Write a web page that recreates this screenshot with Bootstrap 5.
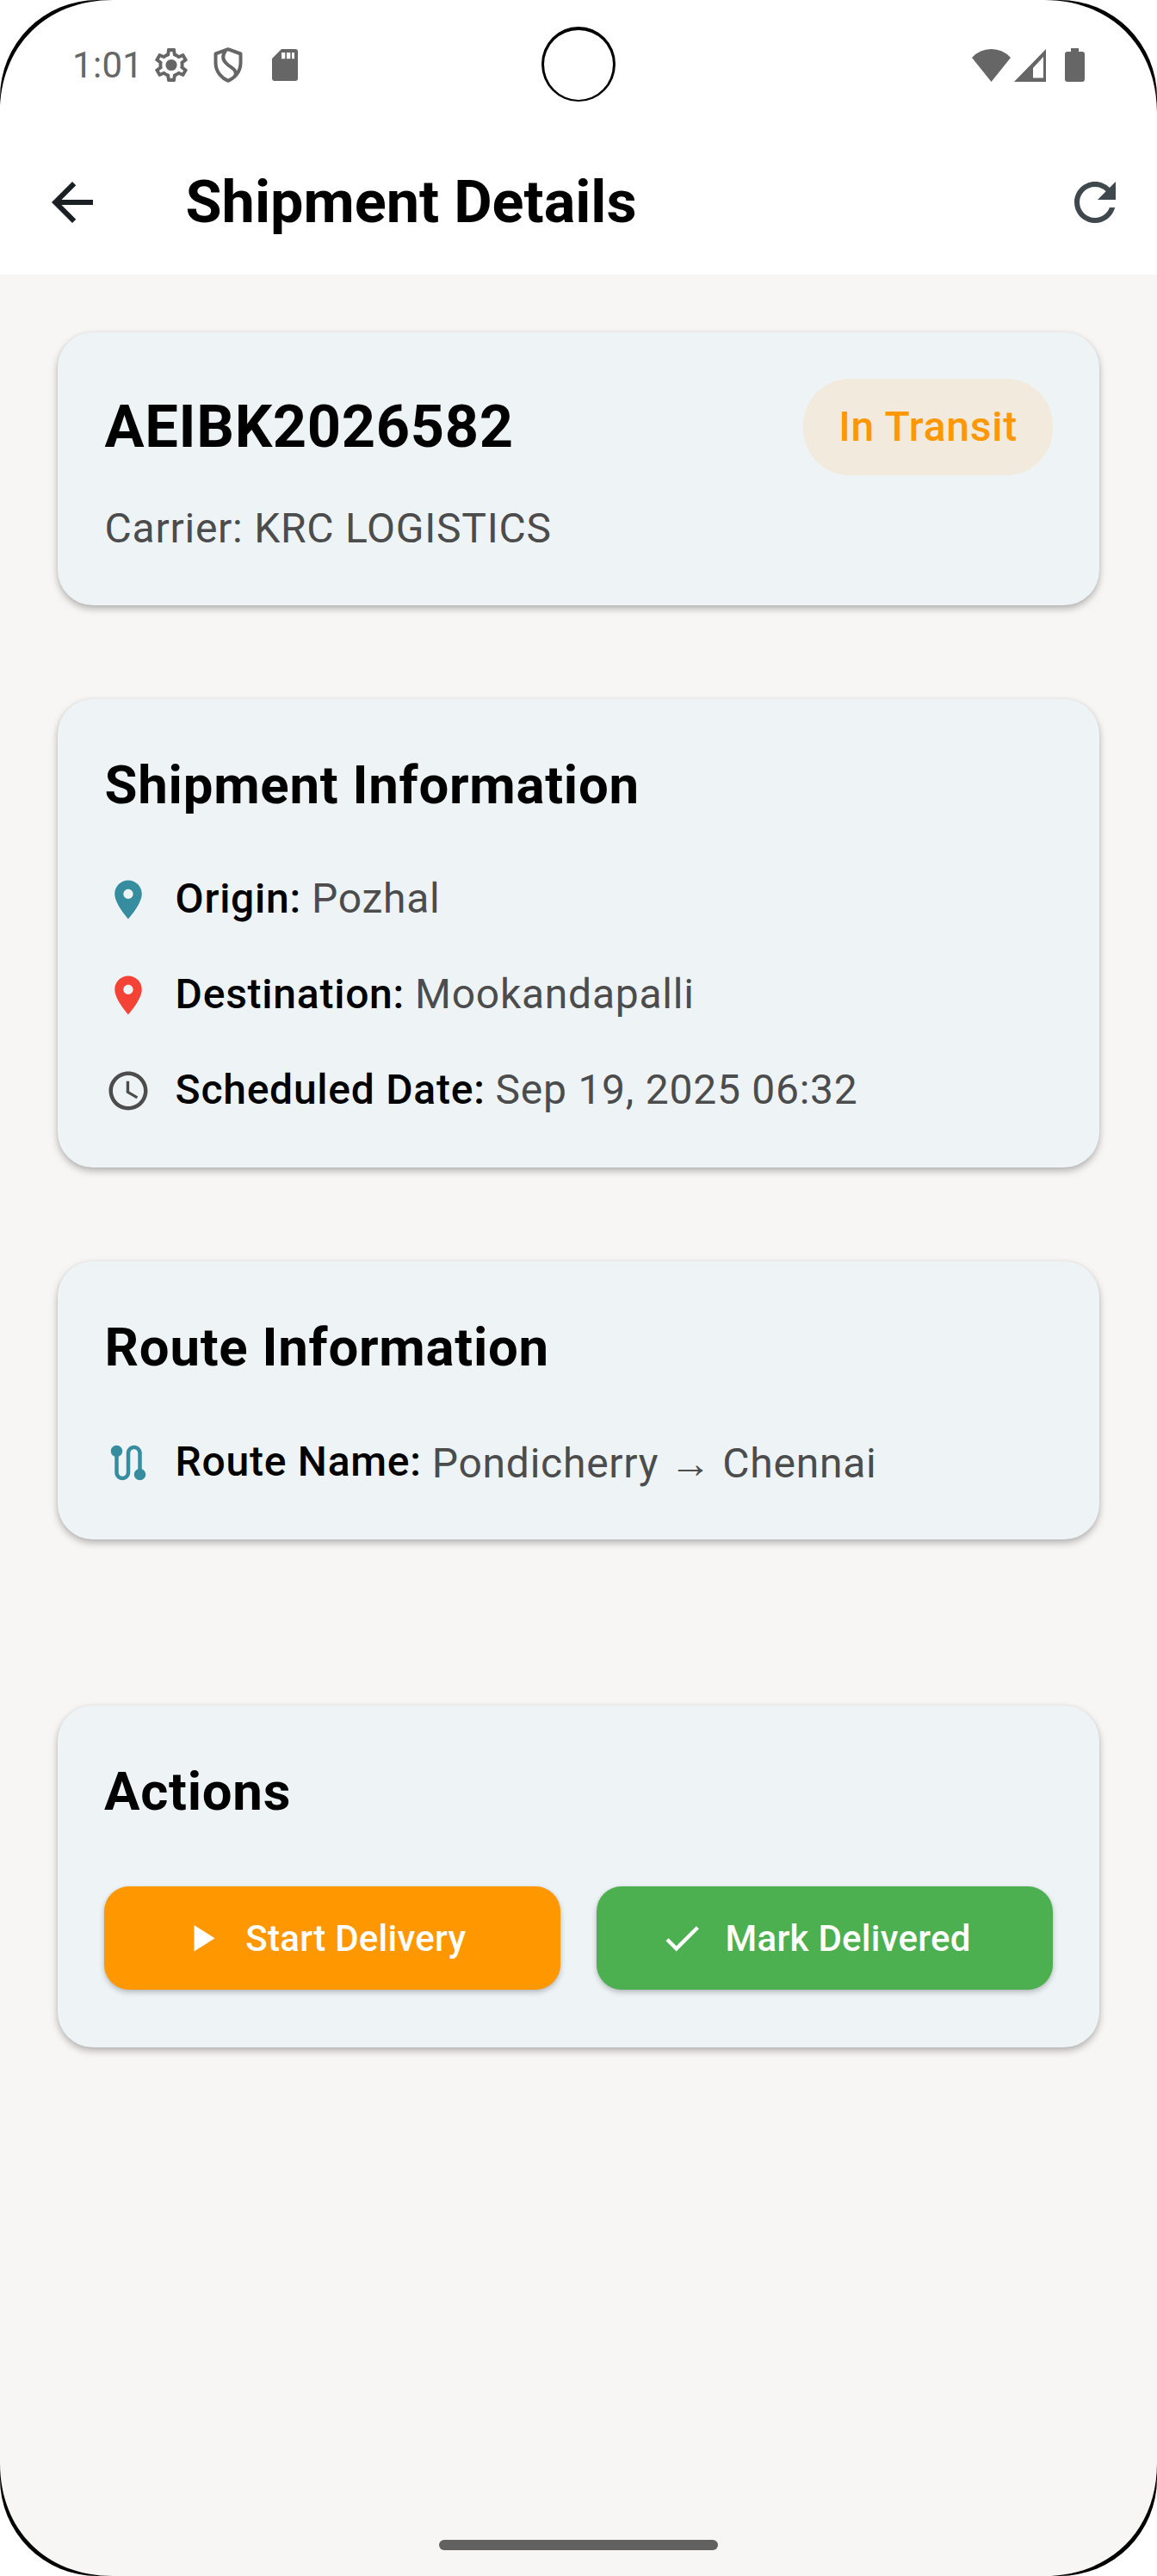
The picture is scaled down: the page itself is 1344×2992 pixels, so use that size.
<!DOCTYPE html>
<html lang="en">
<head>
<meta charset="utf-8">
<meta name="viewport" content="width=device-width, initial-scale=1">
<title>Shipment Details</title>
<link href="https://cdn.jsdelivr.net/npm/bootstrap@5.3.0/dist/css/bootstrap.min.css" rel="stylesheet">
<style>
  body { font-family: Roboto, "Liberation Sans", sans-serif; background: #f7f6f4; color: #000; }
  svg { display: block; flex: none; }
  .screen { min-height: 2992px; overflow: hidden; }
  .statusbar { height: 151px; padding: 0 84px; color: #666; font-size: 42px; letter-spacing: .3px; line-height: 1; }
  .camera-hole { top: 31px; left: 629px; width: 86px; height: 87px; border: 3px solid #000; border-top-width: 4px; border-bottom-width: 2px; }
  .appbar { height: 168px; padding: 0 36px 0 48px; }
  .appbar h1 { font-size: 68.4px; font-weight: 700; line-height: 1.2; margin: 0 0 0 95.5px; }
  .page-main { padding: 67px 67px 0; }
  .panel { background: #eef4f6; border: 0; border-radius: 41px; padding: 54px 54px 54.4px 54.6px; letter-spacing: .75px; font-size: 48px; line-height: 68.6px;
    box-shadow: 0 4px 9px rgba(0,0,0,.28), 0 0 4px rgba(0,0,0,.04); }
  .panel + .panel { margin-top: 109px; }
  .panel + .panel.info-panel { padding-bottom: 55px; }
  .panel + .panel.actions-panel { margin-top: 193px; padding: 54px 54.500px 67px 54px; }
  .panel h2 { font-size: 61.7px; font-weight: 700; line-height: 92px; margin: 0 0 52.5px; }
  .ship-id { font-size: 68.57px; font-weight: 700; letter-spacing: .65px; }
  .status-pill { background: #f1eadd; color: #ff9800; font-weight: 500; padding: 21.7px 41px; border-radius: 54px; }
  .soft { color: #4c4c4c; }
  .carrier-line { margin-top: 28px; }
  .info-rows { gap: 42.4px; }
  .info-rows .field { gap: 12px; }
  .field svg { margin-right: 16px; }
  .field .fw-medium { font-weight: 500; }
  .route-row { height: 70.5px; }
  .route-row .soft { padding-top: 4px; }
  .action-row { gap: 42px; margin-top: 64px; }
  .action-btn { flex: 1 1 0; height: 120px; border: 0; border-radius: 29px; font-size: 42px; font-weight: 500; letter-spacing: .25px; gap: 24.5px; padding: 0 22px 0 0;
    box-shadow: 0 3px 6px rgba(0,0,0,.24), 0 0 3px rgba(0,0,0,.05); }
  .action-btn, .action-btn:hover { color: #fff; }
  .btn-start, .btn-start:hover { background: #ff9800; }
  .btn-done, .btn-done:hover { background: #4caf50; }
  .home-pill { left: 510px; top: 2950px; width: 324px; height: 12px; border-radius: 6px; background: #616161; }
  .edge { width: 131px; height: 131px; }
  .edge-tr { transform: scaleX(-1); }
  .edge-bl { transform: scaleY(-1); }
  .edge-br { transform: scale(-1); }
</style>
</head>
<body>
<svg width="0" height="0" class="position-absolute">
  <defs>
    <g id="edge"><path fill="#fff" d="M0 0H131L113 0A113 113 0 0 0 0 113z"/><path d="M0 131V113A113 113 0 0 1 113 0H131C53.700 0 0 53.700 0 131z"/></g>
    <path id="pin" d="M12 2C8.130 2 5 5.130 5 9c0 5.250 7 13 7 13s7-7.750 7-13c0-3.870-3.130-7-7-7zm0 9.500c-1.380 0-2.500-1.120-2.500-2.500s1.120-2.500 2.500-2.500 2.500 1.120 2.500 2.500-1.120 2.500-2.500 2.500z"/>
  </defs>
</svg>

<div class="screen position-relative">
  <header class="bg-white">
    <div class="statusbar d-flex align-items-center">
      <span>1:01</span>
      <svg style="margin-left:13.500px" width="38" height="39" viewBox="2.200 2 19.600 20" fill="currentColor"><path d="M19.430 12.980c.04-.32.07-.64.07-.98 0-.34-.03-.66-.07-.98l2.110-1.650c.19-.15.24-.42.12-.64l-2-3.460c-.09-.16-.26-.25-.44-.25-.06 0-.12.01-.17.03l-2.490 1c-.52-.4-1.080-.73-1.690-.98l-.38-2.650C14.460 2.180 14.250 2 14 2h-4c-.25 0-.46.18-.49.42l-.38 2.650c-.61.25-1.170.59-1.690.98l-2.490-1c-.06-.02-.12-.03-.18-.03-.17 0-.34.09-.43.25l-2 3.460c-.13.22-.07.49.12.64l2.110 1.650c-.04.32-.07.65-.07.98 0 .33.03.66.07.98l-2.110 1.650c-.19.15-.24.42-.12.64l2 3.460c.09.16.26.25.44.25.06 0 .12-.01.17-.03l2.490-1c.52.4 1.080.73 1.690.98l.38 2.650c.03.24.24.42.49.42h4c.25 0 .46-.18.49-.42l.38-2.650c.61-.25 1.170-.59 1.690-.98l2.490 1c.06.02.12.03.18.03.17 0 .34-.09.43-.25l2-3.460c.12-.22.07-.49-.12-.64l-2.110-1.650zm-1.980-1.710c.04.31.05.52.05.73 0 .21-.02.43-.05.73l-.14 1.130.89.7 1.080.84-.7 1.210-1.270-.51-1.040-.42-.9.68c-.43.32-.84.56-1.250.73l-1.060.43-.16 1.130-.2 1.350h-1.400l-.19-1.350-.16-1.130-1.060-.43c-.43-.18-.83-.41-1.230-.71l-.91-.7-1.060.43-1.270.51-.7-1.210 1.080-.84.89-.7-.14-1.130c-.03-.31-.05-.54-.05-.74s.02-.43.05-.73l.14-1.130-.89-.7-1.080-.84.7-1.210 1.270.51 1.040.42.9-.68c.43-.32.84-.56 1.250-.73l1.060-.43.16-1.130.2-1.350h1.390l.19 1.350.16 1.130 1.060.43c.43.18.83.41 1.230.71l.91.7 1.060-.43 1.270-.51.7 1.210-1.070.85-.89.7.14 1.130z"/><circle cx="12" cy="12" r="3.400"/></svg>
      <svg style="margin-left:30px" width="34" height="41" viewBox="0 0 34 41" fill="none" stroke="currentColor" stroke-width="4"><path stroke-linejoin="round" d="M17 2.200L31.500 7.500V18C31.500 28 25 35.500 17 38.800C9 35.500 2.500 28 2.500 18V7.500z"/><path d="M14 4C8.500 11 12 16.500 17 20.500S27 26 25.500 33"/></svg>
      <svg style="margin-left:34px" width="30" height="37" viewBox="0 0 30 37" fill="currentColor"><path fill-rule="evenodd" d="M11 0h16q3 0 3 3v31q0 3-3 3H3q-3 0-3-3V11zM11 4v7.300h4.300V4zM17 4v7.300h4.300V4zM23 4v7.300h3V4z"/></svg>
      <svg class="ms-auto" width="45" height="38" viewBox="0 0 45 38" fill="currentColor"><path d="M22.500 38L0 10A30.300 30.300 0 0 1 45 10z"/></svg>
      <svg style="margin-left:4px" width="37" height="38" viewBox="0 0 37 38" fill="currentColor"><path fill-rule="evenodd" d="M0 38L37 0V38zM22 22V33.500H34V9z"/></svg>
      <svg style="margin-left:22px" width="23" height="39" viewBox="0 0 23 39" fill="currentColor"><path d="M7 0h9v4h4q3 0 3 3v29q0 3-3 3H3q-3 0-3-3V7q0-3 3-3h4z"/></svg>
    </div>
    <nav class="appbar d-flex align-items-center">
      <svg width="72" height="72" viewBox="0 0 24 24" fill="#191f22"><path d="M20 11H7.830l5.590-5.590L12 4l-8 8 8 8 1.410-1.410L7.830 13H20v-2z"/></svg>
      <h1>Shipment Details</h1>
      <svg class="ms-auto" width="72" height="72" viewBox="0 0 24 24" fill="#3f484c"><path d="M17.650 6.350C16.200 4.900 14.210 4 12 4c-4.420 0-7.990 3.580-7.990 8s3.570 8 7.990 8c3.730 0 6.840-2.550 7.730-6h-2.080c-.82 2.330-3.040 4-5.650 4-3.310 0-6-2.690-6-6s2.690-6 6-6c1.660 0 3.140.69 4.220 1.780L13 11h7V4l-2.350 2.350z"/></svg>
    </nav>
  </header>

  <main class="page-main">
    <section class="card panel">
      <div class="d-flex align-items-center justify-content-between">
        <div class="ship-id">AEIBK2026582</div>
        <div class="status-pill">In Transit</div>
      </div>
      <div class="carrier-line soft">Carrier: KRC LOGISTICS</div>
    </section>

    <section class="card panel info-panel">
      <h2>Shipment Information</h2>
      <div class="info-rows d-flex flex-column">
        <div class="field d-flex align-items-center"><svg width="54" height="54" viewBox="0 0 24 24" fill="#368d9f"><use href="#pin"/></svg><span class="fw-medium">Origin:</span><span class="soft">Pozhal</span></div>
        <div class="field d-flex align-items-center"><svg width="54" height="54" viewBox="0 0 24 24" fill="#f44336"><use href="#pin"/></svg><span class="fw-medium">Destination:</span><span class="soft">Mookandapalli</span></div>
        <div class="field d-flex align-items-center"><svg width="54" height="54" viewBox="0 0 24 24" fill="#4c4c4c"><path d="M11.990 2C6.470 2 2 6.480 2 12s4.470 10 9.990 10C17.520 22 22 17.520 22 12S17.520 2 11.990 2zM12 20c-4.420 0-8-3.580-8-8s3.580-8 8-8 8 3.580 8 8-3.580 8-8 8zm.5-13H11v6l5.250 3.150.75-1.230-4.500-2.670z"/></svg><span class="fw-medium">Scheduled Date:</span><span class="soft">Sep 19, 2025 06:32</span></div>
      </div>
    </section>

    <section class="card panel">
      <h2>Route Information</h2>
      <div class="info-rows">
        <div class="field route-row d-flex align-items-center"><svg width="54" height="54" viewBox="0 0 24 24" fill="#368d9f"><path d="M19 15.180V7c0-2.210-1.790-4-4-4s-4 1.790-4 4v10c0 1.100-.9 2-2 2s-2-.9-2-2V8.820C8.160 8.400 9 7.300 9 6c0-1.660-1.340-3-3-3S3 4.340 3 6c0 1.300.84 2.400 2 2.820V17c0 2.210 1.790 4 4 4s4-1.790 4-4V7c0-1.100.9-2 2-2s2 .9 2 2v8.180c-1.160.41-2 1.510-2 2.820 0 1.660 1.340 3 3 3s3-1.340 3-3c0-1.300-.84-2.400-2-2.820z"/></svg><span class="fw-medium">Route Name:</span><span class="soft">Pondicherry → Chennai</span></div>
      </div>
    </section>

    <section class="card panel actions-panel">
      <h2 class="mb-0">Actions</h2>
      <div class="action-row d-flex">
        <button type="button" class="btn action-btn btn-start d-flex align-items-center justify-content-center"><svg width="52.500" height="52.500" viewBox="0 0 24 24" fill="#fff"><path d="M8 5v14l11-7z"/></svg>Start Delivery</button>
        <button type="button" class="btn action-btn btn-done d-flex align-items-center justify-content-center"><svg width="52.500" height="52.500" viewBox="0 0 24 24" fill="#fff"><path d="M9 16.170L4.830 12l-1.420 1.410L9 19 21 7l-1.410-1.410z"/></svg>Mark Delivered</button>
      </div>
    </section>
  </main>

  <div class="camera-hole position-absolute rounded-circle bg-white"></div>
  <div class="home-pill position-absolute"></div>
  <svg class="edge position-absolute top-0 start-0"><use href="#edge"/></svg>
  <svg class="edge edge-tr position-absolute top-0 end-0"><use href="#edge"/></svg>
  <svg class="edge edge-bl position-absolute bottom-0 start-0"><use href="#edge"/></svg>
  <svg class="edge edge-br position-absolute bottom-0 end-0"><use href="#edge"/></svg>
</div>
<script src="https://cdn.jsdelivr.net/npm/bootstrap@5.3.0/dist/js/bootstrap.bundle.min.js"></script>
</body>
</html>
